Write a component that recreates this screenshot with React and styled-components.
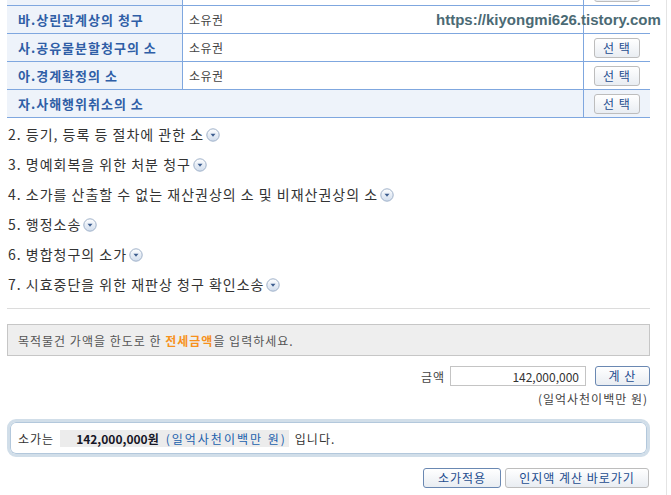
import styled, { createGlobalStyle } from "styled-components";

const GlobalStyle = createGlobalStyle`
    body {
        margin: 0;
        background: #fff;
        font-family: "Noto Sans CJK KR", "Noto Sans", sans-serif;
        color: #333;
    }
`

// first row is scrolled mostly out of view, only its bottom edge shows
const rows = [
    { label: "", value: "", partial: true },
    { label: "바.상린관계상의 청구", value: "소유권", noButton: true },
    { label: "사.공유물분할청구의 소", value: "소유권" },
    { label: "아.경계확정의 소", value: "소유권" },
    { label: "자.사해행위취소의 소", wide: true },
]

const items = [
    "2. 등기, 등록 등 절차에 관한 소",
    "3. 명예회복을 위한 처분 청구",
    "4. 소가를 산출할 수 없는 재산권상의 소 및 비재산권상의 소",
    "5. 행정소송",
    "6. 병합청구의 소가",
    "7. 시효중단을 위한 재판상 청구 확인소송",
]

function ToggleIcon() {
    return (
        <svg width="14" height="14" viewBox="0 0 14 14">
            <defs>
                <linearGradient id="tg" x1="0" y1="0" x2="0" y2="1">
                    <stop offset="0" stopColor="#ffffff" />
                    <stop offset="1" stopColor="#d0dcec" />
                </linearGradient>
            </defs>
            <circle cx="7" cy="7" r="6.2" fill="url(#tg)" stroke="#9fb1c9" strokeWidth="1" />
            <path d="M4.5 5.7 L9.5 5.7 L7 8.7 Z" fill="#3d5d8e" />
        </svg>
    )
}

export default function App() {
    return (
        <>
            <GlobalStyle />
            <Page>
                <Watermark>https://kiyongmi626.tistory.com</Watermark>
                <Table>
                    {rows.map((r, i) => (
                        <Row key={i} $light={r.wide}>
                            <LabelCell $wide={r.wide}>{r.label}</LabelCell>
                            {!r.wide && <ValueCell>{r.value}</ValueCell>}
                            <ButtonCell>
                                {r.partial && <SmallButton aria-label="선택" />}
                                {!r.partial && !r.noButton && <SmallButton>선 택</SmallButton>}
                            </ButtonCell>
                        </Row>
                    ))}
                </Table>

                <List>
                    {items.map((t) => (
                        <Item key={t}>
                            <span>{t}</span>
                            <ToggleIcon />
                        </Item>
                    ))}
                </List>

                <Divider />

                <Notice>
                    목적물건 가액을 한도로 한 <strong>전세금액</strong>을 입력하세요.
                </Notice>

                <AmountRow>
                    <span>금액</span>
                    <AmountInput defaultValue="142,000,000" />
                    <SmallButton $dark $w={55}>계 산</SmallButton>
                </AmountRow>
                <Reading>(일억사천이백만 원)</Reading>

                <Result>
                    <span>소가는</span>
                    <Highlight>
                        <b>142,000,000원</b>
                        <em>(일억사천이백만 원)</em>
                    </Highlight>
                    <span>입니다.</span>
                </Result>

                <Actions>
                    <SmallButton $dark $w={78}>소가적용</SmallButton>
                    <SmallButton $w={144}>인지액 계산 바로가기</SmallButton>
                </Actions>
            </Page>
        </>
    )
}

const Page = styled.div`
    position: relative;
    box-sizing: border-box;
    width: 667px;
    height: 495px;
    padding: 0 16px 0 7px;
    border-right: 1px solid #e4e4e4;
    overflow: hidden;
`

const Watermark = styled.div`
    position: absolute;
    top: 11px;
    left: 436px;
    font-family: "Liberation Sans", Arial, sans-serif;
    font-weight: bold;
    font-size: 15px;
    color: #4b6a74;
    white-space: nowrap;
    z-index: 2;
`

const Table = styled.div`
    margin-top: -22px;
`

const Row = styled.div`
    display: grid;
    grid-template-columns: 176px 401px 66px;
    height: 28px;
    box-sizing: border-box;
    border-bottom: 1px solid #7fa7df;
    background: ${(p) => (p.$light ? "#eef3fa" : "#fff")};
`

const LabelCell = styled.div`
    grid-column: ${(p) => (p.$wide ? "span 2" : "auto")};
    display: flex;
    align-items: center;
    padding-left: 11px;
    background: #eef3fa;
    border-right: 1px solid #7fa7df;
    font-size: 13px;
    font-weight: bold;
    letter-spacing: 1px;
    color: #2f5ea6;
`

const ValueCell = styled.div`
    display: flex;
    align-items: center;
    padding-left: 6px;
    border-right: 1px solid #7fa7df;
    font-size: 12px;
    letter-spacing: 0.5px;
    color: #444;
`

const ButtonCell = styled.div`
    display: flex;
    align-items: center;
    justify-content: center;
`

const SmallButton = styled.button`
    box-sizing: border-box;
    width: ${(p) => p.$w || 46}px;
    height: 20px;
    padding: 0;
    border: 1px solid ${(p) => (p.$dark ? "#6a88b2" : "#bdbdbd")};
    border-radius: 3px;
    background: linear-gradient(#ffffff, #e9edf2);
    font-family: "Noto Sans CJK KR", sans-serif;
    font-size: 12px;
    letter-spacing: 1px;
    color: #1d4d8f;
    line-height: 18px;
`

const List = styled.div`
    margin-top: 1px;
`

const Item = styled.div`
    display: flex;
    align-items: center;
    gap: 2px;
    height: 30px;
    padding-left: 1px;
    font-size: 14px;
    letter-spacing: 1px;
    color: #333;

    svg {
        margin-top: 2px;
    }
`

const Divider = styled.div`
    margin-top: 9px;
    height: 1px;
    background: #dcdcdc;
`

const Notice = styled.div`
    margin-top: 15px;
    box-sizing: border-box;
    height: 32px;
    display: flex;
    align-items: center;
    padding-left: 10px;
    background: #eeeeee;
    border: 1px solid #c6c6c6;
    font-size: 12px;
    letter-spacing: 1px;
    color: #555;
    white-space: pre;

    strong {
        color: #f7911c;
        font-weight: bold;
    }
`

const AmountRow = styled.div`
    margin-top: 10px;
    display: flex;
    justify-content: flex-end;
    align-items: center;
    gap: 5px;
    font-size: 12px;
    letter-spacing: 1px;
    color: #444;

    button {
        margin-left: 4px;
    }
`

const AmountInput = styled.input`
    box-sizing: border-box;
    width: 136px;
    height: 20px;
    border: 1px solid #c4c4c4;
    padding: 0 6px 0 0;
    text-align: right;
    font-family: "Noto Sans CJK KR", sans-serif;
    font-size: 12px;
    color: #333;
`

const Reading = styled.div`
    margin-top: 5px;
    text-align: right;
    padding-right: 2px;
    font-size: 12px;
    letter-spacing: 1px;
    line-height: 16px;
    color: #444;
`

const Result = styled.div`
    margin-top: 12px;
    box-sizing: border-box;
    height: 38px;
    display: flex;
    align-items: center;
    gap: 6px;
    padding-left: 8px;
    border: 3px solid #d1dee9;
    border-radius: 9px;
    box-shadow: inset 0 0 0 1px #b3c8dc;
    font-size: 12px;
    letter-spacing: 1px;
    color: #333;
`

const Highlight = styled.span`
    display: flex;
    align-items: center;
    gap: 7px;
    height: 17px;
    padding: 0 2px 0 16px;
    background: #ececec;

    b {
        color: #161626;
        letter-spacing: 0;
    }

    em {
        font-style: normal;
        letter-spacing: 2px;
        color: #2261ad;
    }
`

const Actions = styled.div`
    margin-top: 11px;
    display: flex;
    justify-content: flex-end;
    gap: 4px;
    padding-right: 1px;
`
